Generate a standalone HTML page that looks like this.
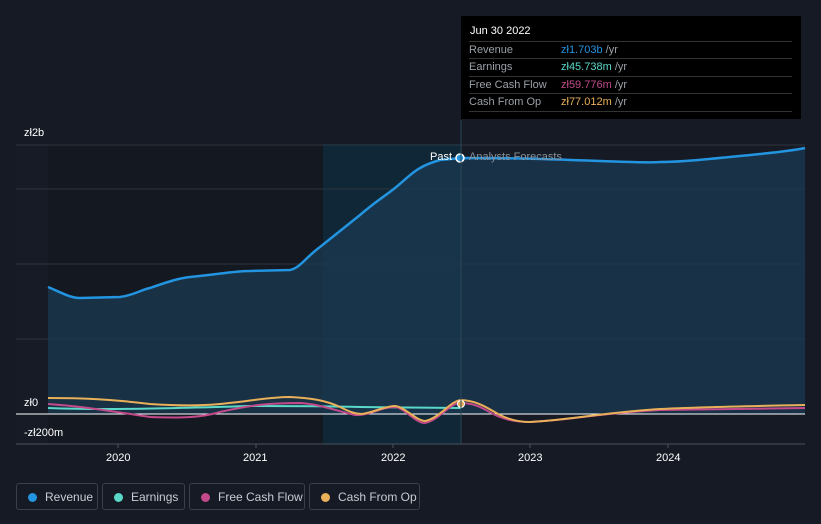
<!DOCTYPE html>
<html><head><style>
body{margin:0;background:#151a24;width:821px;height:524px;overflow:hidden;font-family:"Liberation Sans",sans-serif}
.tt{position:absolute;left:461px;top:16px;width:340px;height:103px;background:#000;color:#fff;font-size:11px}
.tt .h{position:absolute;left:9px;top:9px;font-size:11px}
.row{position:absolute;left:8px;width:323px;border-top:1px solid #333;height:17px;line-height:17px;color:#9aa0a8}
.row span{position:absolute;left:92px}
.lg{position:absolute;top:483px;height:27px;border:1px solid #3a3f48;border-radius:3px;color:#c8ccd2;font-size:12px;line-height:27px;box-sizing:border-box}
.lg i{position:absolute;left:11px;top:9px;width:9px;height:9px;border-radius:50%}
.lg b{font-weight:normal;position:absolute;left:28px}
</style></head><body>
<svg width="821" height="524" style="position:absolute;left:0;top:0">
<rect x="16" y="144" width="307" height="300" fill="#161b25"/>
<rect x="48" y="144" width="275" height="300" fill="#141820"/>
<rect x="323" y="144" width="138" height="300" fill="#0f2736"/>
<g stroke="#2e3440" stroke-width="1">
<line x1="16" y1="145" x2="805" y2="145"/><line x1="16" y1="189" x2="805" y2="189"/>
<line x1="16" y1="264" x2="805" y2="264"/><line x1="16" y1="339" x2="805" y2="339"/>
<line x1="16" y1="444" x2="805" y2="444" stroke="#4a505a"/>
</g>
<path d="M48,287 C60,292 70,298 80,298 L120,297 C135,295 140,290 150,288 C170,281 180,278 190,277 C220,274 235,271 250,271 L290,270 C300,268 305,258 320,247 C340,231 350,223 360,215 C375,202 385,196 395,188 C410,176 415,167 440,160 L461,158 C500,158 520,158 600,161 C630,162 650,163 660,162 C680,162 700,160 760,154 C780,152 795,150 805,148 L805,414 L48,414 Z" fill="#1b3a52" opacity="0.75"/>
<path d="M48,287 C60,292 70,298 80,298 L120,297 C135,295 140,290 150,288 C170,281 180,278 190,277 C220,274 235,271 250,271 L290,270 C300,268 305,258 320,247 C340,231 350,223 360,215 C375,202 385,196 395,188 C410,176 415,167 440,160 L461,158 C500,158 520,158 600,161 C630,162 650,163 660,162 C680,162 700,160 760,154 C780,152 795,150 805,148" fill="none" stroke="#2394df" stroke-width="2.5"/>
<line x1="16" y1="414" x2="805" y2="414" stroke="#fff" stroke-width="1"/>
<path d="M48,408 C100,410 150,409 250,406 C300,406 320,406 360,407 L461,408" fill="none" stroke="#5ad8c8" stroke-width="2"/>
<path d="M48,404 C80,406 110,411 150,417 C180,418 200,418 220,412 C250,405 270,403 300,403 C320,404 340,412 355,415 C370,416 380,407 395,407 C405,408 415,423 425,423 C440,420 450,402 461,403 C480,403 490,414 500,417 C510,421 520,422 530,422 C570,420 600,413 660,410 C700,409 750,409 805,408" fill="none" stroke="#c24a8a" stroke-width="2"/>
<path d="M48,398 C80,398 110,399 150,404 C180,406 200,406 220,404 C250,401 270,397 290,397 C310,398 325,400 340,407 C350,412 355,414 362,414 C375,412 385,406 395,406 C405,407 415,420 425,421 C440,418 450,401 461,400 C480,401 490,410 500,415 C510,420 520,422 530,422 C570,420 600,413 660,409 C700,407 750,406 805,405" fill="none" stroke="#e9b05a" stroke-width="2"/>
<circle cx="461" cy="404" r="3.5" fill="#e9b05a" stroke="#fff"/>
<circle cx="460" cy="158" r="4" fill="#2394df" stroke="#fff" stroke-width="1.5"/>
<line x1="461" y1="120" x2="461" y2="444" stroke="#2a4858"/>
<g fill="#fff" font-size="11" font-family="Liberation Sans">
<text x="24" y="136">zł2b</text><text x="24" y="406">zł0</text><text x="24" y="436">-zł200m</text>
<text x="106" y="461">2020</text><text x="243" y="461">2021</text><text x="381" y="461">2022</text><text x="518" y="461">2023</text><text x="656" y="461">2024</text>
<text x="430" y="160">Past</text><text x="469" y="160" fill="#8a919a">Analysts Forecasts</text>
</g>
<g stroke="#4a505a"><line x1="118" y1="444" x2="118" y2="448"/><line x1="256" y1="444" x2="256" y2="448"/><line x1="393" y1="444" x2="393" y2="448"/><line x1="530" y1="444" x2="530" y2="448"/><line x1="668" y1="444" x2="668" y2="448"/></g>
</svg>
<div class="tt"><div class="h">Jun 30 2022</div>
<div class="row" style="top:25px">Revenue<span style="color:#2394df">zł1.703b <em style="font-style:normal;color:#9aa0a8">/yr</em></span></div>
<div class="row" style="top:42px">Earnings<span style="color:#5ad8c8">zł45.738m <em style="font-style:normal;color:#9aa0a8">/yr</em></span></div>
<div class="row" style="top:60px">Free Cash Flow<span style="color:#c24a8a">zł59.776m <em style="font-style:normal;color:#9aa0a8">/yr</em></span></div>
<div class="row" style="top:77px;border-bottom:1px solid #333">Cash From Op<span style="color:#e9b05a">zł77.012m <em style="font-style:normal;color:#9aa0a8">/yr</em></span></div>
</div>
<div class="lg" style="left:16px;width:82px"><i style="background:#2394df"></i><b>Revenue</b></div>
<div class="lg" style="left:102px;width:83px"><i style="background:#5ad8c8"></i><b>Earnings</b></div>
<div class="lg" style="left:189px;width:116px"><i style="background:#c24a8a"></i><b>Free Cash Flow</b></div>
<div class="lg" style="left:309px;width:111px"><i style="background:#e9b05a"></i><b>Cash From Op</b></div>
</body></html>
